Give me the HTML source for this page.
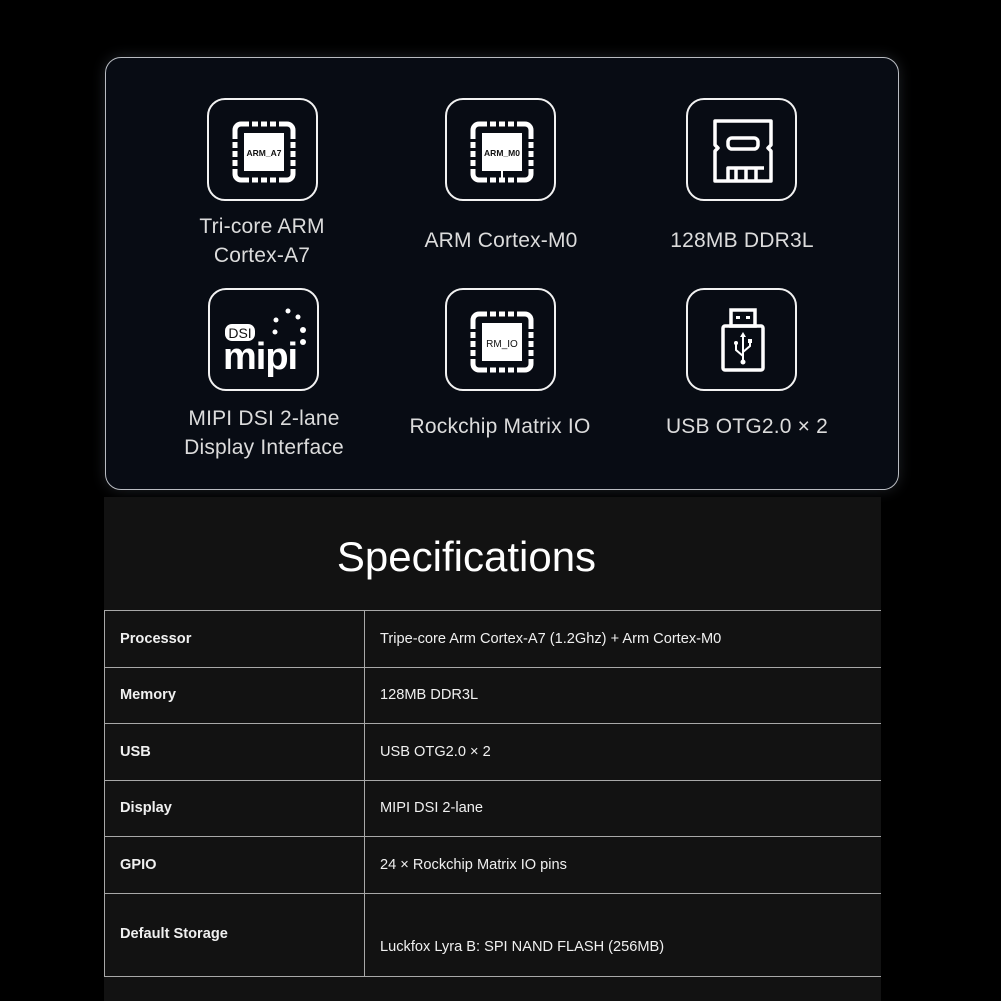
<!DOCTYPE html>
<html><head><meta charset="utf-8"><style>
*{margin:0;padding:0;box-sizing:border-box}
body{width:1001px;height:1001px;background:#000;position:relative;overflow:hidden;font-family:"Liberation Sans",Arial,sans-serif}
.panel{position:absolute;left:105px;top:57px;width:794px;height:433px;background:#080c14;border:1.5px solid #b9bcc2;border-radius:16px;box-shadow:0 0 14px rgba(120,130,150,.25)}
.box{position:absolute;width:111px;height:103px;border:2px solid #f2f2f2;border-radius:18px}
.box svg{position:absolute;left:0;top:0}
.lbl{position:absolute;width:240px;text-align:center;color:#dcdcdc;font-size:21px;line-height:29px;letter-spacing:.2px}
.sec{position:absolute;left:104px;top:497px;width:777px;height:504px;background:#121212}
h1{position:absolute;left:104px;width:725px;top:534px;text-align:center;color:#fff;font-weight:400;font-size:42px;line-height:46px}
table{position:absolute;left:104px;top:610px;width:777px;border-collapse:collapse;color:#f0f0f0;font-size:14.6px}
td{border:1px solid #a8a8a8;border-right:none;padding:0 0 0 15px;height:56.5px;vertical-align:middle}
td:first-child{width:260px;font-weight:bold;border-left:1px solid #a8a8a8}
</style></head><body>
<div class="panel"></div>

<div class="box" style="left:207px;top:98px"><svg width="111" height="103" viewBox="0 0 111 103">
<g fill="none" stroke="#fff" stroke-width="5"><rect x="26" y="24" width="58" height="56" rx="6"/></g>
<g fill="#080c14"><rect x="40" y="20" width="3" height="8"/><rect x="49" y="20" width="3" height="8"/><rect x="58" y="20" width="3" height="8"/><rect x="67" y="20" width="3" height="8"/>
<rect x="40" y="76" width="3" height="8"/><rect x="49" y="76" width="3" height="8"/><rect x="58" y="76" width="3" height="8"/><rect x="67" y="76" width="3" height="8"/>
<rect x="22" y="39" width="8" height="3"/><rect x="22" y="48" width="8" height="3"/><rect x="22" y="57" width="8" height="3"/><rect x="22" y="66" width="8" height="3"/>
<rect x="80" y="39" width="8" height="3"/><rect x="80" y="48" width="8" height="3"/><rect x="80" y="57" width="8" height="3"/><rect x="80" y="66" width="8" height="3"/></g>
<rect x="35" y="33" width="40" height="38" fill="#fff"/>
<text x="55" y="56" font-size="8.5" font-weight="bold" text-anchor="middle" fill="#111" font-family="Liberation Sans">ARM_A7</text></svg></div>
<div class="lbl" style="left:142px;top:212px">Tri-core ARM<br>Cortex-A7</div>

<div class="box" style="left:445px;top:98px"><svg width="111" height="103" viewBox="0 0 111 103">
<g fill="none" stroke="#fff" stroke-width="5"><rect x="26" y="24" width="58" height="56" rx="6"/></g>
<g fill="#080c14"><rect x="40" y="20" width="3" height="8"/><rect x="49" y="20" width="3" height="8"/><rect x="58" y="20" width="3" height="8"/><rect x="67" y="20" width="3" height="8"/>
<rect x="40" y="76" width="3" height="8"/><rect x="49" y="76" width="3" height="8"/><rect x="58" y="76" width="3" height="8"/><rect x="67" y="76" width="3" height="8"/>
<rect x="22" y="39" width="8" height="3"/><rect x="22" y="48" width="8" height="3"/><rect x="22" y="57" width="8" height="3"/><rect x="22" y="66" width="8" height="3"/>
<rect x="80" y="39" width="8" height="3"/><rect x="80" y="48" width="8" height="3"/><rect x="80" y="57" width="8" height="3"/><rect x="80" y="66" width="8" height="3"/></g>
<rect x="35" y="33" width="40" height="38" fill="#fff"/>
<rect x="54" y="69" width="2" height="10" fill="#fff"/>
<text x="55" y="56" font-size="8.5" font-weight="bold" text-anchor="middle" fill="#111" font-family="Liberation Sans">ARM_M0</text></svg></div>
<div class="lbl" style="left:381px;top:226px">ARM Cortex-M0</div>

<div class="box" style="left:686px;top:98px"><svg width="111" height="103" viewBox="0 0 111 103">
<g fill="none" stroke="#fff" stroke-width="3.5" stroke-linejoin="round">
<path d="M27 21 H83 V45 L80 48 L83 51 V81 H27 V51 L30 48 L27 45 Z"/>
<rect x="40" y="38" width="30" height="11" rx="4"/>
<path d="M40 81 V68 H48 V81 M48 68 H58 V81 M58 68 H68 V81 M68 68 H76"/>
</g></svg></div>
<div class="lbl" style="left:622px;top:226px">128MB DDR3L</div>

<div class="box" style="left:208px;top:288px"><svg width="111" height="103" viewBox="0 0 111 103">
<rect x="15" y="34" width="30" height="17" rx="7" fill="#fff"/>
<text x="30" y="48" font-size="14" text-anchor="middle" fill="#111" font-family="Liberation Sans">DSI</text>
<text x="13" y="79" font-size="38" font-weight="bold" fill="#fff" font-family="Liberation Sans" letter-spacing="-1">mipi</text>
<g fill="#fff"><circle cx="66" cy="30" r="2.5"/><circle cx="78" cy="21" r="2.5"/><circle cx="88" cy="27" r="2.5"/><circle cx="93" cy="40" r="3"/><circle cx="93" cy="52" r="3"/><circle cx="65" cy="42" r="2.5"/></g>
</svg></div>
<div class="lbl" style="left:144px;top:404px">MIPI DSI 2-lane<br>Display Interface</div>

<div class="box" style="left:445px;top:288px"><svg width="111" height="103" viewBox="0 0 111 103">
<g fill="none" stroke="#fff" stroke-width="5"><rect x="26" y="24" width="58" height="56" rx="6"/></g>
<g fill="#080c14"><rect x="40" y="20" width="3" height="8"/><rect x="49" y="20" width="3" height="8"/><rect x="58" y="20" width="3" height="8"/><rect x="67" y="20" width="3" height="8"/>
<rect x="40" y="76" width="3" height="8"/><rect x="49" y="76" width="3" height="8"/><rect x="58" y="76" width="3" height="8"/><rect x="67" y="76" width="3" height="8"/>
<rect x="22" y="39" width="8" height="3"/><rect x="22" y="48" width="8" height="3"/><rect x="22" y="57" width="8" height="3"/><rect x="22" y="66" width="8" height="3"/>
<rect x="80" y="39" width="8" height="3"/><rect x="80" y="48" width="8" height="3"/><rect x="80" y="57" width="8" height="3"/><rect x="80" y="66" width="8" height="3"/></g>
<rect x="35" y="33" width="40" height="38" fill="#fff"/>
<text x="55" y="57" font-size="10" text-anchor="middle" fill="#111" font-family="Liberation Sans">RM_IO</text></svg></div>
<div class="lbl" style="left:380px;top:412px">Rockchip Matrix IO</div>

<div class="box" style="left:686px;top:288px"><svg width="111" height="103" viewBox="0 0 111 103">
<g fill="none" stroke="#fff" stroke-width="3.5">
<rect x="43" y="20" width="24" height="16"/><rect x="35" y="36" width="40" height="44" rx="2"/></g>
<g fill="#fff"><rect x="48" y="26" width="4" height="3"/><rect x="58" y="26" width="4" height="3"/></g>
<g fill="none" stroke="#fff" stroke-width="2"><path d="M55 46 V72 M55 66 L48 60 V54 M55 62 L62 56 V52"/></g>
<g fill="#fff"><circle cx="55" cy="72" r="2.5"/><path d="M52 47 L55 42 L58 47Z"/><circle cx="48" cy="53" r="2"/><rect x="60" y="49" width="4" height="4"/></g>
</svg></div>
<div class="lbl" style="left:627px;top:412px">USB OTG2.0 × 2</div>

<div class="sec"></div>
<h1>Specifications</h1>
<table>
<tr><td>Processor</td><td>Tripe-core Arm Cortex-A7 (1.2Ghz) + Arm Cortex-M0</td></tr>
<tr><td>Memory</td><td>128MB DDR3L</td></tr>
<tr><td>USB</td><td>USB OTG2.0 × 2</td></tr>
<tr><td>Display</td><td>MIPI DSI 2-lane</td></tr>
<tr><td>GPIO</td><td>24 × Rockchip Matrix IO pins</td></tr>
<tr><td style="height:83px;padding-bottom:2px">Default Storage</td><td style="height:83px;padding-top:24px">Luckfox Lyra B: SPI NAND FLASH (256MB)</td></tr>
</table>
</body></html>
